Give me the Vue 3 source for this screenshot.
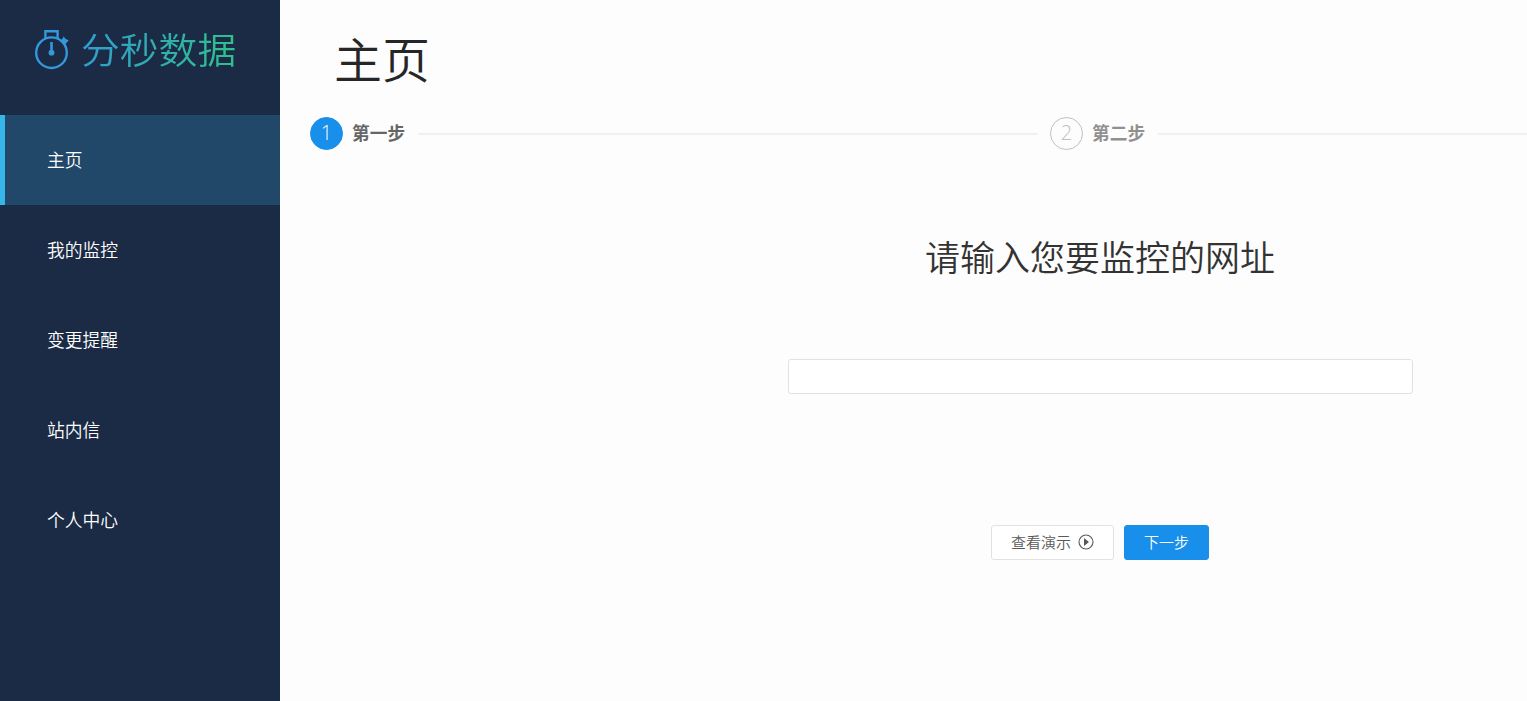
<script setup>
import { ref } from 'vue'

const menus = ['主页', '我的监控', '变更提醒', '站内信', '个人中心']
const activeMenu = ref(0)
const url = ref('')

// 步骤条
const steps = ['第一步', '第二步']
const current = ref(0)

const nextStep = () => {
  if (current.value < steps.length - 1) {
    current.value++
  }
}
</script>

<template>
  <div class="layout">
    <!-- 左侧：导航 -->
    <aside class="sidebar">
      <div class="logo">
        <svg class="logo-icon" viewBox="0 0 34 40" width="34" height="40">
          <circle cx="16.5" cy="22.7" r="15.3" fill="none" stroke="#3498db" stroke-width="2.4" />
          <path d="M10.4 8V1.2h12.2V8" fill="none" stroke="#3498db" stroke-width="2.4" />
          <path d="M16.5 12v10" stroke="#3498db" stroke-width="2.6" />
          <circle cx="16.5" cy="22.7" r="2.9" fill="#3498db" />
          <path d="M28.7 6.3l1.4 2.3 3.6 1.9-3.8 3.9-4.8-3.7 2.2-1.6z" fill="#3498db" />
        </svg>
        <span class="logo-text">分秒数据</span>
      </div>

      <nav class="menu">
        <a
          v-for="(item, index) in menus"
          :key="item"
          class="menu-item"
          :class="{ active: activeMenu === index }"
          @click="activeMenu = index"
        >
          {{ item }}
        </a>
      </nav>
    </aside>

    <!-- 右侧：内容 -->
    <main class="main">
      <div class="content">
        <h1 class="title">主页</h1>

        <div class="steps">
          <div
            v-for="(step, index) in steps"
            :key="step"
            class="step"
            :class="{ process: current === index }"
          >
            <span class="step-num">{{ index + 1 }}</span>
            <span class="step-title">{{ step }}</span>
            <span class="step-line"></span>
          </div>
        </div>

        <div class="form">
          <h2 class="form-title">请输入您要监控的网址</h2>
          <input v-model="url" type="text" class="input-field" />
          <div class="button-group">
            <button class="btn">
              查看演示
              <svg class="play" viewBox="0 0 16 16" width="16" height="16">
                <circle cx="8" cy="8" r="7" fill="none" stroke="currentColor" stroke-width="1.1" />
                <path d="M6 4v8L11 8z" fill="currentColor" />
              </svg>
            </button>
            <button class="btn btn-primary" @click="nextStep">下一步</button>
          </div>
        </div>
      </div>
    </main>
  </div>
</template>

<style>
body {
  margin: 0;
  overflow: hidden;
}
</style>

<style scoped>
.layout {
  display: flex;
  height: 100vh;
  overflow: hidden;
  background: #fdfdfd;
  font-family: "Noto Sans", "Noto Sans CJK SC", sans-serif;
}

/* 导航 */
.sidebar {
  flex: none;
  width: 280px;
  background: #1b2b45;
}

.logo {
  display: flex;
  box-sizing: border-box;
  height: 115px;
  padding: 30px 0 0 35px;
}

.logo-text {
  height: 40px;
  margin-left: 12px;
  font-family: "Noto Sans CJK SC", sans-serif;
  font-size: 38.8px;
  font-weight: 350;
  line-height: 36px;
  background: linear-gradient(90deg, #349bd0, #2ec28b);
  -webkit-background-clip: text;
  background-clip: text;
  color: transparent;
  transform: scaleY(0.93);
}

.menu-item {
  display: block;
  box-sizing: border-box;
  height: 90px;
  padding-left: 42px;
  border-left: 5px solid transparent;
  color: #fff;
  font-size: 17.8px;
  font-weight: 350;
  line-height: 91px;
  cursor: pointer;
}

.menu-item.active {
  background: #214869;
  border-left-color: #37b5e8;
}

/* 内容 */
.main {
  flex: 1;
  min-width: 0;
  overflow: hidden;
}

.content {
  width: 1580px;
  padding: 0 30px;
}

.title {
  margin: 0;
  padding: 24px 0 21px 24px;
  color: #262626;
  font-size: 48px;
  font-weight: 350;
  line-height: 72px;
}

.steps {
  display: flex;
}

.step {
  display: flex;
  flex: none;
  align-items: center;
  width: 728px;
  height: 33px;
  margin-right: 12px;
}

.step-num {
  box-sizing: border-box;
  width: 33px;
  height: 33px;
  border: 1px solid #bfbfbf;
  border-radius: 50%;
  color: #bfbfbf;
  font-family: "Open Sans", "Noto Sans", sans-serif;
  font-size: 20px;
  font-weight: 300;
  line-height: 29px;
  text-align: center;
}

.step-title {
  margin-left: 9px;
  color: #909090;
  font-size: 17.7px;
  font-weight: bold;
  line-height: 33px;
}

.step-line {
  flex: 1;
  height: 2px;
  margin-left: 13px;
  background: #f1f1f1;
}

.step.process .step-num {
  background: #188fea;
  border-color: #188fea;
  color: #fff;
}

.step.process .step-title {
  color: #666;
}

.form {
  display: flex;
  flex-direction: column;
  align-items: center;
  padding-top: 82px;
}

.form-title {
  margin: 0;
  color: #333;
  font-size: 35px;
  font-weight: 350;
  line-height: 52px;
}

.input-field {
  box-sizing: border-box;
  width: 625px;
  height: 35px;
  margin-top: 75px;
  padding: 0 10px;
  border: 1px solid #e2e2e2;
  border-radius: 3px;
  background: #fff;
  font-size: 15px;
  outline: none;
}

.input-field:focus {
  border-color: #188fea;
}

.button-group {
  display: flex;
  gap: 10px;
  margin-top: 131px;
}

.btn {
  display: flex;
  align-items: center;
  box-sizing: border-box;
  height: 35px;
  padding: 0 19px;
  border: 1px solid #e2e2e2;
  border-radius: 3px;
  background: #fff;
  color: #595959;
  font-family: inherit;
  font-size: 15px;
  font-weight: 350;
  line-height: 33px;
  cursor: pointer;
}

.play {
  margin: -1px 0 0 7px;
}

.btn-primary {
  background: #188fea;
  border-color: #188fea;
  color: #fff;
}
</style>
